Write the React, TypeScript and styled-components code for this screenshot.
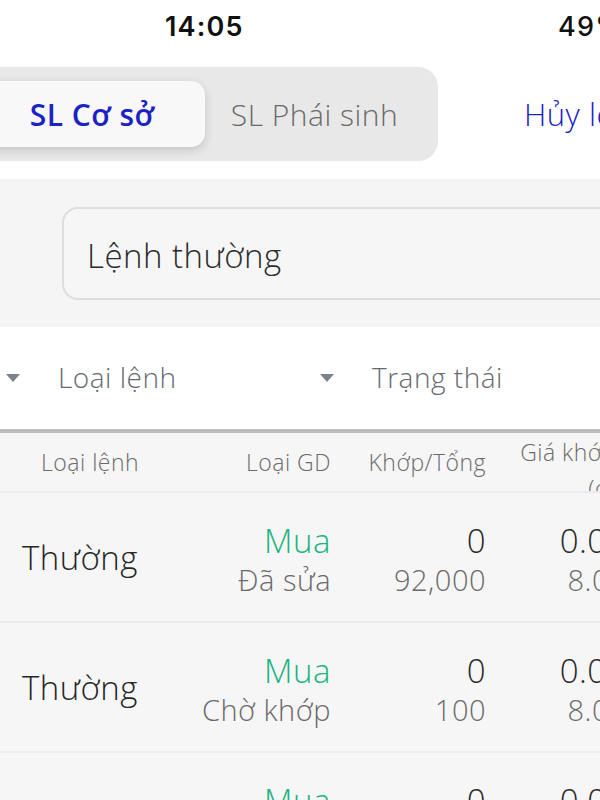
import React from "react";
import styled, { createGlobalStyle } from "styled-components";

const Global = createGlobalStyle`
  html, body { margin: 0; padding: 0; background: #ffffff; }
  body { font-family: "Open Sans", "Noto Sans", sans-serif; font-weight: 300; letter-spacing: 0.5px; }
  * { box-sizing: border-box; }
`;

const Page = styled.div`
  width: 600px;
  height: 800px;
  overflow: hidden;
  background: #ffffff;
  position: relative;
`;

const StatusBar = styled.div`
  display: flex;
  align-items: center;
  height: 52px;
  padding-left: 165px;
  width: 700px;
  font-family: "Inter", "Roboto", sans-serif;
  font-weight: 600;
  font-size: 27px;
  letter-spacing: 1.2px;
  color: #111;
`;

const Time = styled.span`
  width: 393px;
  flex: none;
`;

const Battery = styled.span`
  font-weight: 500;
`;

const TabsRow = styled.div`
  display: flex;
  align-items: center;
  height: 112px;
  margin-top: 15px;
  padding-bottom: 18px;
  width: 700px;
`;

const Segmented = styled.div`
  display: grid;
  grid-template-columns: 226px 219px;
  margin-left: -35px;
  padding: 14px;
  background: #e8e8e8;
  border-radius: 20px;
  height: 94px;
`;

const Segment = styled.div<{ $active?: boolean }>`
  display: flex;
  align-items: center;
  justify-content: center;
  border-radius: 14px;
  font-size: 30px;
  font-weight: ${(p) => (p.$active ? 600 : 300)};
  color: ${(p) => (p.$active ? "#1c22c4" : "#6b6b6b")};
  background: ${(p) => (p.$active ? "#f8f8f8" : "transparent")};
  box-shadow: ${(p) => (p.$active ? "0 3px 10px rgba(0,0,0,0.16)" : "none")};
`;

const CancelLink = styled.div`
  margin-left: 86px;
  font-size: 31px;
  color: #1c22c4;
  white-space: nowrap;
`;

const SearchBand = styled.div`
  background: #f5f5f5;
  padding: 28px 0 27px 62px;
`;

const SearchBox = styled.div`
  height: 93px;
  width: 600px;
  border: 2px solid #dedede;
  border-radius: 16px;
  background: #f6f6f6;
  display: flex;
  align-items: center;
  padding: 4px 0 0 23px;
  font-size: 33px;
  color: #2b2b2b;
`;

const FilterRow = styled.div`
  height: 106px;
  background: #ffffff;
  display: grid;
  grid-template-columns: 314px 300px;
  align-items: center;
  padding-left: 6px;
  padding-bottom: 2px;
  border-bottom: 4px solid #bcbcbc;
`;

const Filter = styled.div`
  display: flex;
  align-items: center;
  gap: 38px;
  font-size: 28px;
  color: #666a70;
`;

const Caret = styled.span`
  width: 0;
  height: 0;
  border-left: 7px solid transparent;
  border-right: 7px solid transparent;
  border-top: 8px solid #7c8190;
  margin-top: 2px;
`;

const Table = styled.div`
  background: #f6f6f6;
  width: 700px;
`;

const Grid = styled.div`
  display: grid;
  grid-template-columns: 190px 141px 155px 140px;
  border-bottom: 2px solid #ececec;
`;

const HeaderRow = styled(Grid)`
  height: 60px;
  align-items: start;
  overflow: hidden;
`;

const HeadCell = styled.div<{ $align?: "left" | "right" }>`
  text-align: ${(p) => p.$align ?? "right"};
  font-size: 23px;
  line-height: 30px;
  padding-top: 14px;
  color: #6b6b6b;
  padding-left: ${(p) => (p.$align === "left" ? "41px" : "0")};
`;

const PriceHead = styled.div`
  font-size: 23px;
  line-height: 36px;
  padding-top: 1px;
  padding-right: 10px;
  color: #6b6b6b;
  text-align: right;
  white-space: pre-line;
`;

const BodyRow = styled(Grid)`
  height: 130px;
  align-items: center;
`;

const OrderType = styled.div`
  padding-left: 22px;
  font-size: 33px;
  color: #262626;
`;

const Stack = styled.div`
  display: flex;
  flex-direction: column;
  align-items: flex-end;
  gap: 2px;
  margin-top: 6px;
`;

const Main = styled.span<{ $green?: boolean }>`
  font-size: 33px;
  line-height: 38px;
  color: ${(p) => (p.$green ? "#1bb37f" : "#2a2a2a")};
`;

const Sub = styled.span`
  font-size: 29px;
  line-height: 36px;
  color: #6a6a6a;
`;

const rows = [
  { type: "Thường", side: "Mua", status: "Đã sửa", matched: "0", total: "92,000", price: "0.00", ordPrice: "8.00" },
  { type: "Thường", side: "Mua", status: "Chờ khớp", matched: "0", total: "100", price: "0.00", ordPrice: "8.00" },
  { type: "Thường", side: "Mua", status: "Chờ khớp", matched: "0", total: "100", price: "0.00", ordPrice: "8.00" },
];

export default function App() {
  return (
    <>
      <Global />
      <Page>
        <StatusBar>
          <Time>14:05</Time>
          <Battery>49%</Battery>
        </StatusBar>
        <TabsRow>
          <Segmented>
            <Segment $active>SL Cơ sở</Segment>
            <Segment>SL Phái sinh</Segment>
          </Segmented>
          <CancelLink>Hủy lệnh</CancelLink>
        </TabsRow>
        <SearchBand>
          <SearchBox>Lệnh thường</SearchBox>
        </SearchBand>
        <FilterRow>
          <Filter>
            <Caret />
            Loại lệnh
          </Filter>
          <Filter>
            <Caret />
            Trạng thái
          </Filter>
        </FilterRow>
        <Table>
          <HeaderRow>
            <HeadCell $align="left">Loại lệnh</HeadCell>
            <HeadCell>Loại GD</HeadCell>
            <HeadCell>Khớp/Tổng</HeadCell>
            <PriceHead>{"Giá khớp\n(đ)"}</PriceHead>
          </HeaderRow>
          {rows.map((r, i) => (
            <BodyRow key={i}>
              <OrderType>{r.type}</OrderType>
              <Stack>
                <Main $green>{r.side}</Main>
                <Sub>{r.status}</Sub>
              </Stack>
              <Stack>
                <Main>{r.matched}</Main>
                <Sub>{r.total}</Sub>
              </Stack>
              <Stack>
                <Main>{r.price}</Main>
                <Sub>{r.ordPrice}</Sub>
              </Stack>
            </BodyRow>
          ))}
        </Table>
      </Page>
    </>
  );
}
